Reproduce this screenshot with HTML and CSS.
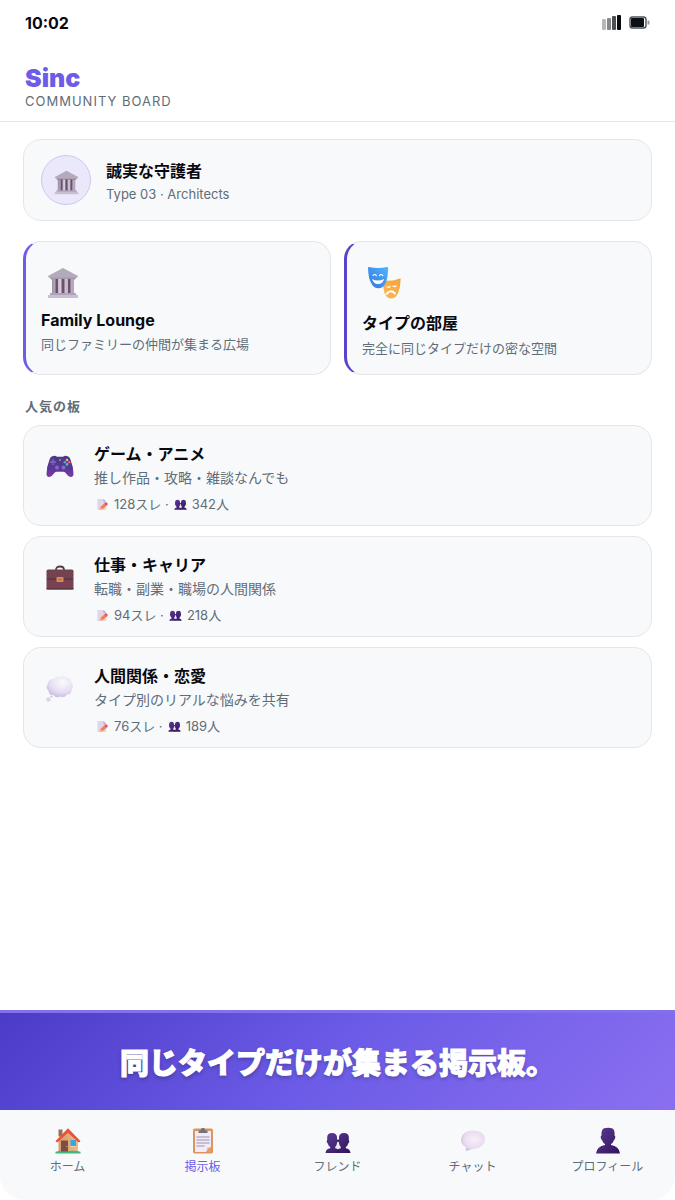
FILE: index.html
```html
<!DOCTYPE html>
<html lang="ja">
<head>
<meta charset="utf-8">
<meta name="viewport" content="width=device-width, initial-scale=1">
<title>Sinc</title>
<link rel="stylesheet" href="styles.css">
</head>
<body>
<svg class="defs" aria-hidden="true">
  <defs>
    <linearGradient id="purple" x1="0" y1="0" x2="1" y2="1"><stop offset="0" stop-color="#5b3a94"/><stop offset="1" stop-color="#32145c"/></linearGradient>
    <linearGradient id="pad" x1="0" y1="0" x2="0" y2="1"><stop offset="0" stop-color="#4b3a83"/><stop offset=".6" stop-color="#5a3795"/><stop offset="1" stop-color="#7b3cae"/></linearGradient>
    <linearGradient id="blue" x1="1" y1="0" x2="0" y2="1"><stop offset="0" stop-color="#53b5ff"/><stop offset="1" stop-color="#2f75e0"/></linearGradient>
    <linearGradient id="orange" x1="1" y1="0" x2="0" y2="1"><stop offset="0" stop-color="#f2a33c"/><stop offset="1" stop-color="#ffb95a"/></linearGradient>
    <radialGradient id="cloud" cx=".6" cy=".3" r=".8"><stop offset="0" stop-color="#fbfafd"/><stop offset=".6" stop-color="#e4ddf1"/><stop offset="1" stop-color="#bfb2dc"/></radialGradient>
    <radialGradient id="bubble" cx=".55" cy=".45" r=".65"><stop offset="0" stop-color="#f8effa"/><stop offset=".65" stop-color="#eadcf0"/><stop offset="1" stop-color="#c5b5d3"/></radialGradient>
    <linearGradient id="stone" x1="0" y1="0" x2="1" y2="0"><stop offset="0" stop-color="#9d91a6"/><stop offset=".4" stop-color="#d8cee2"/><stop offset="1" stop-color="#b1a4bc"/></linearGradient>
    <linearGradient id="leather" x1="0" y1="0" x2="0" y2="1"><stop offset="0" stop-color="#70434f"/><stop offset="1" stop-color="#7d4154"/></linearGradient>
    <linearGradient id="wall" x1="0" y1="0" x2="1" y2="0"><stop offset="0" stop-color="#d59c6c"/><stop offset="1" stop-color="#eabb85"/></linearGradient>
  </defs>
  <symbol id="i-temple" viewBox="0 0 32 32">
    <path d="M3 10v1.500l2 1.500h22l2-1.500V10z" fill="#a49bab"/>
    <path d="M16 1 31 9q0 1.500-1 1.500H2Q1 10.500 1 9z" fill="#b4aabb"/>
    <path d="M5 12h22v15H5z" fill="#6b5169"/>
    <path d="M5 12h3.500v15H5zM11 12h3.500v15H11zM17.500 12H21v15h-3.500zM23.500 12H27v15h-3.500z" fill="url(#stone)"/>
    <path d="M3 26h26v2H3z" fill="#afa3ba"/><path d="M1 28h30v3H1z" fill="#c8bfd0"/>
  </symbol>
  <symbol id="i-masks" viewBox="0 0 34 34">
    <path d="M15 14q9 2 18-1.500.7-.2.700.8-.2 8-2.700 14-2.500 5.500-7.500 5.200-4.500-.3-6.200-6z" fill="url(#orange)"/>
    <path d="M1 1.500Q.8.800 1.700 1q9.500 2 18.500 0 .9-.2.900.7 0 10-2.600 15.500-2.400 5-7 5-5 0-7.500-5.500Q1.300 12 1 1.500z" fill="url(#blue)"/>
    <g fill="none" stroke="#fff" stroke-width="1.200" stroke-linecap="round"><path d="M6 9.500q1.500-2 3.300 0M12.500 9.500q1.500-2 3.300 0M20 21q1.800 1 3-.7M26 20q1.500 1.300 3 0"/><path d="M19.500 28q4-5 8.500-.5" stroke-width="2"/></g>
    <path d="M5 13q6 3 12 0-1 5-6 5-4.500 0-6-5z" fill="#fff"/>
  </symbol>
  <symbol id="i-game" viewBox="0 0 28 23">
    <path d="M7 1q2-1 4 .7h6Q19 0 21 1q2.500.3 3.300 3Q27.500 12 27.500 19q-.2 3.300-3 3-2 0-4-3-1.500-2.200-3-2.200h-7q-1.500 0-3 2.200-2 3-4 3-2.800.3-3-3Q.5 12 3.700 4 4.500 1.300 7 1z" fill="url(#pad)"/>
    <path d="M7 4v6M4 7h6" stroke="#7660b8" stroke-width="1.800"/><circle cx="11" cy="12.500" r="2" fill="#8168c9"/><circle cx="17.500" cy="12.500" r="2" fill="#8168c9"/>
    <circle cx="21" cy="5" r="1.300" fill="#f2bd45"/><circle cx="18.800" cy="7.200" r="1.300" fill="#5a9ef3"/><circle cx="23.200" cy="7.200" r="1.300" fill="#ef5d67"/><circle cx="21" cy="9.400" r="1.300" fill="#43c69d"/>
    <path d="M13 5h2" stroke="#9a86d8" stroke-width="1.500"/>
  </symbol>
  <symbol id="i-case" viewBox="0 0 28 24">
    <path d="M10 4.500q0-3.500 4-3.500t4 3.500" fill="none" stroke="#593c42" stroke-width="1.800"/>
    <rect x=".5" y="4" width="27" height="20" rx="1.500" fill="url(#leather)"/><path d="M1 13h26v1H1z" fill="#502f39"/><path d="M.5 22.500h27V24H.5z" fill="#573743"/>
    <rect x="10.500" y="11.500" width="7" height="5" rx=".8" fill="#dd8c5b"/><path d="M12 13h4v2h-4z" fill="#c4744d"/>
  </symbol>
  <symbol id="i-thought" viewBox="0 0 28 27">
    <path d="M8 4q2-3 6-2.300Q17-.4 20.500 2.500 25 2.500 25 7q3.500 3.500 1 7-.5 5.500-5 5.500-2.500 4-6.500 2-4.500 2-7-1.500Q3 20.500 2.500 16-1 12 2 8.500 2.500 3.500 8 4z" fill="url(#cloud)"/>
    <circle cx="2.500" cy="24.500" r="2.300" fill="#ddd6ea"/><circle cx="5.500" cy="21.500" r="1" fill="#c9bddd"/>
  </symbol>
  <symbol id="i-memo" viewBox="0 0 14 14">
    <path d="M1.500 1H8l3 3v9H1.500z" fill="#dfd6eb"/><path d="m8 1 3 3H8z" fill="#b7a8cb"/>
    <path d="m4 12.500 1-3.200 4.500-4 2.400 2.600-4.500 4z" fill="#fb7d43"/><path d="m9 5.800 1-1q1.100-.6 2.100.5t.3 2.100l-.9.900z" fill="#e55367"/><path d="m4 12.500 1-3.200 2.400 2.600z" fill="#e7b184"/>
  </symbol>
  <symbol id="i-people" viewBox="0 0 26 21">
    <path d="M.5 21q.3-4 4.700-4.700V15q-1.800-1-2.400-3.500-1.800-2-.6-4V5Q2.500 1 7 1t5 4v2.500h2V5q.5-4 5-4t4.800 4v2.500q1.200 2-.6 4-.6 2.500-2.400 3.500v1.300q4.400.7 4.700 4.700z" fill="url(#purple)"/>
    <path d="M12.200 10h1.600q.3 3.500 2 5v1.300q-2 .3-2.800 1.300-.8-1-2.800-1.300V15q1.700-1.500 2-5z" fill="#e9e7f3"/>
    <path d="M13 17.500V21" stroke="#29104d" stroke-width=".8"/>
  </symbol>
  <symbol id="i-home" viewBox="0 0 26 26">
    <path d="M3.500 2h4v7h-4z" fill="#96725d"/><path d="m3.500 12 9.500-9 10 9v12.500H3.500z" fill="url(#wall)"/>
    <path d="M.5 24.200q5-1.500 12.500-.7 8-.7 12.500.7V26H.5z" fill="#42b978"/>
    <path d="M6 13h7v11H6z" fill="#804b42"/><circle cx="11.800" cy="19" r=".6" fill="#efbd72"/>
    <path d="M15.500 12.500H21v6h-5.500z" fill="#36a5eb"/><path d="M15.500 18.500H21v1h-5.500z" fill="#f0d3ab"/>
    <path d="M13 .8 25.400 13.500q-.8 2-2.600.7L13 5.200l-9.800 9q-1.800 1.300-2.600-.7z" fill="#e75438"/>
  </symbol>
  <symbol id="i-board" viewBox="0 0 22 27">
    <rect x="1" y="1.500" width="20" height="25" rx="1.800" fill="#db965f"/><path d="M3 4h16v16l-5 5H3z" fill="#f1eaf7"/><path d="M19 20v5h-5q2-1.500 1.500-4.500 2 .7 3.500-.5z" fill="#eb9c63"/>
    <path d="M6.500 6V3.500h2Q9 .8 11 .8t2.500 2.700h2V6z" fill="#767080"/>
    <path d="M4.500 10h13M4.500 13h13M4.500 16h13M4.500 19h8" stroke="#9d91b0"/>
  </symbol>
  <symbol id="i-chat" viewBox="0 0 26 21">
    <path d="M14 .5q11 1 11 9-1 9-11.500 9.200L7 20.700q-1.500.3-1.300-1.200l.3-2.500Q1 14.500 1 10 1.500 1 14 .5z" fill="url(#bubble)"/>
  </symbol>
  <symbol id="i-user" viewBox="0 0 26 26">
    <path d="M9 .8q5-1 8.500.2Q20 2.300 19.500 8q1.500.5.300 3.500-1 1.500-1 1.500-.8 2.500-2.800 3.500v1q8 1 9 8.500H1q1-7.500 9-8.500v-1Q8 15.500 7.200 13q0 0-1-1.500Q5 8.500 6.500 8 6 2.500 9 .8z" fill="url(#purple)"/>
  </symbol>
</svg>

<div class="screen">
  <div class="status">
    <span class="time">10:02</span>
    <svg class="status-icons" viewBox="0 0 48 16" aria-hidden="true">
      <rect y="4" width="4" height="11" rx="1" fill="#b7b8b9"/><rect x="5" y="3" width="4" height="12" rx="1" fill="#85878a"/><rect x="10" y="1" width="4" height="14" rx="1" fill="#4d5054"/><rect x="15" width="4" height="15" rx="1" fill="#080a0d"/>
      <rect x="28" y="2" width="16" height="11" rx="2.500" fill="#fff" stroke="#4c5157" stroke-width="1.400"/><rect x="29" y="3" width="13" height="9" rx="1" fill="#0b1016"/><rect x="45.500" y="5.500" width="2" height="4" rx=".5" fill="#9a9da0"/>
    </svg>
  </div>

  <header class="header">
    <h1 class="brand">Sinc</h1>
    <p class="tagline">COMMUNITY BOARD</p>
  </header>

  <main class="content">
    <section class="profile">
      <span class="avatar"><svg class="avatar-icon" aria-hidden="true"><use href="#i-temple"/></svg></span>
      <div class="profile-info">
        <h2 class="profile-name">誠実な守護者</h2>
        <p class="profile-type">Type 03 · Architects</p>
      </div>
    </section>

    <div class="rooms">
      <a class="room" href="#lounge">
        <svg class="room-icon" aria-hidden="true"><use href="#i-temple"/></svg>
        <h2 class="room-title">Family Lounge</h2>
        <p class="room-text">同じファミリーの仲間が集まる広場</p>
      </a>
      <a class="room room-dark" href="#type">
        <svg class="room-icon masks" aria-hidden="true"><use href="#i-masks"/></svg>
        <h2 class="room-title">タイプの部屋</h2>
        <p class="room-text">完全に同じタイプだけの密な空間</p>
      </a>
    </div>

    <h2 class="section-title">人気の板</h2>
    <div class="boards">
      <a class="board" href="#games">
        <svg class="board-icon" aria-hidden="true"><use href="#i-game"/></svg>
        <div>
          <h3 class="board-title">ゲーム・アニメ</h3>
          <p class="board-text">推し作品・攻略・雑談なんでも</p>
          <p class="meta"><svg class="meta-icon" aria-hidden="true"><use href="#i-memo"/></svg><span>128スレ ·</span><svg class="meta-icon" aria-hidden="true"><use href="#i-people"/></svg><span>342人</span></p>
        </div>
      </a>
      <a class="board" href="#work">
        <svg class="board-icon" aria-hidden="true"><use href="#i-case"/></svg>
        <div>
          <h3 class="board-title">仕事・キャリア</h3>
          <p class="board-text">転職・副業・職場の人間関係</p>
          <p class="meta"><svg class="meta-icon" aria-hidden="true"><use href="#i-memo"/></svg><span>94スレ ·</span><svg class="meta-icon" aria-hidden="true"><use href="#i-people"/></svg><span>218人</span></p>
        </div>
      </a>
      <a class="board" href="#love">
        <svg class="board-icon" aria-hidden="true"><use href="#i-thought"/></svg>
        <div>
          <h3 class="board-title">人間関係・恋愛</h3>
          <p class="board-text">タイプ別のリアルな悩みを共有</p>
          <p class="meta"><svg class="meta-icon" aria-hidden="true"><use href="#i-memo"/></svg><span>76スレ ·</span><svg class="meta-icon" aria-hidden="true"><use href="#i-people"/></svg><span>189人</span></p>
        </div>
      </a>
    </div>
  </main>

  <p class="banner">同じタイプだけが集まる掲示板。</p>

  <nav class="tabs">
    <a class="tab" href="#home"><svg class="tab-icon" aria-hidden="true"><use href="#i-home"/></svg>ホーム</a>
    <a class="tab active" href="#board" aria-current="page"><svg class="tab-icon" aria-hidden="true"><use href="#i-board"/></svg>掲示板</a>
    <a class="tab" href="#friends"><svg class="tab-icon" viewBox="0 -5 26 27" aria-hidden="true"><use href="#i-people" width="26" height="21"/></svg>フレンド</a>
    <a class="tab" href="#chat"><svg class="tab-icon" aria-hidden="true"><use href="#i-chat"/></svg>チャット</a>
    <a class="tab" href="#profile"><svg class="tab-icon" aria-hidden="true"><use href="#i-user"/></svg>プロフィール</a>
  </nav>
</div>
</body>
</html>
```
FILE: styles.css
```css
* { box-sizing: border-box; }
body {
  margin: 0;
  background: #fff;
  color: #080a0f;
  font-family: Inter, "Noto Sans CJK JP", sans-serif;
}
h1, h2, h3, p { margin: 0; }
a { color: inherit; text-decoration: none; }
svg { display: block; flex: none; }
.defs { position: absolute; width: 0; height: 0; }

.screen { display: flex; flex-direction: column; min-height: 100vh; }

.status {
  display: flex;
  align-items: center;
  justify-content: space-between;
  padding: 13px 25px 0;
}
.time { font-size: 16px; font-weight: 700; line-height: 20px; }
.status-icons { width: 48px; height: 16px; }

.header {
  padding: 29px 25px 12px;
  border-bottom: 1px solid #e6e8eb;
}
.brand { color: #6c5ce7; font-size: 25px; font-weight: 900; line-height: 32px; }
.tagline { color: #5f6d78; font-size: 13px; line-height: 15px; letter-spacing: 1px; }

.content { flex: 1; padding: 17px 23px; }

.profile, .room, .board {
  background: #f8f9fb;
  border: 1px solid #e5e6eb;
  border-radius: 18px;
}
.profile { display: flex; align-items: center; gap: 15px; padding: 15px 17px; }
.avatar {
  display: grid;
  place-items: center;
  width: 50px;
  height: 50px;
  border: 1px solid #cec8ed;
  border-radius: 50%;
  background: #ebe8fb;
}
.avatar-icon { width: 25px; height: 25px; margin-top: 4px; }
.profile-info { padding-top: 4px; }
.profile-name { font-size: 16px; line-height: 24px; }
.profile-type { color: #5f6d78; font-size: 13px; line-height: 22px; }

.rooms { display: grid; grid-template-columns: 1fr 1fr; gap: 13px; margin-top: 20px; }
.room { border-left: 3px solid #6c5ce7; padding: 16px 15px 17px; }
.room-dark { border-left-color: #5844c8; }
.room-icon { width: 32px; height: 32px; margin: 9px 6px 11px; }
.masks { width: 34px; height: 34px; margin: 8px 5px 10px; }
.room-title { font-size: 16px; font-weight: 700; }
.room-text { margin-top: 4px; color: #5f6d78; font-size: 13px; }

.section-title {
  margin: 21px 2px 9px;
  color: #5f6d78;
  font-size: 13px;
  line-height: 20px;
  letter-spacing: 1px;
}
.boards { display: grid; gap: 10px; }
.board { display: flex; gap: 20px; padding: 12px 22px; }
.board-icon { width: 28px; height: 27px; margin-top: 15px; }
.board-title { font-size: 16px; line-height: 32px; }
.board-text { color: #5f6d78; font-size: 14px; line-height: 16px; }
.meta {
  display: flex;
  align-items: center;
  gap: 5px;
  margin-top: 10px;
  padding-left: 2px;
  color: #5f6d78;
  font-size: 13px;
  line-height: 17px;
}
.meta-icon { width: 13px; height: 13px; }

.banner {
  padding: 29px 16px 25px;
  border-top: 3px solid #8172eb;
  background: linear-gradient(135deg, #4b3bc7, #6c5ce7 50%, #8b6ff0);
  color: #fff;
  font-size: 29px;
  font-weight: 900;
  line-height: 43px;
  text-align: center;
  text-shadow: 0 2px 4px #0000004d;
  -webkit-text-stroke: 1px #fff;
}

.tabs {
  display: grid;
  grid-template-columns: repeat(5, 1fr);
  padding: 17px 0 23px;
  border-radius: 0 0 24px 24px;
  background: #f8f9fb;
}
.tab {
  display: flex;
  flex-direction: column;
  align-items: center;
  gap: 3px;
  color: #5f6d78;
  font-size: 12px;
  line-height: 20px;
}
.tab-icon { width: 26px; height: 27px; }
.active { color: #6c5ce7; }
```
